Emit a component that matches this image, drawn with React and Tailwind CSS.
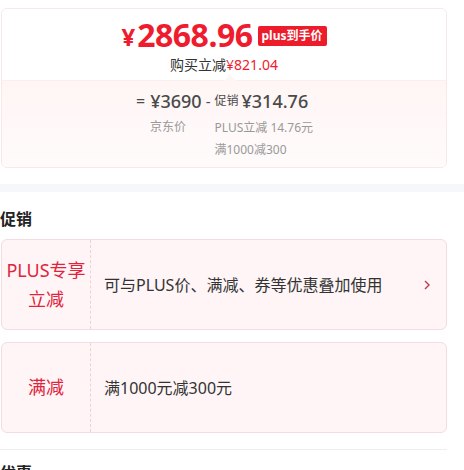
import React from "react";

export default function App() {
  const font = { fontFamily: '"Noto Sans", "Noto Sans CJK SC", sans-serif' };
  return (
    <div className="w-[464px] h-[470px] overflow-hidden bg-white" style={font}>
      <div className="w-[447px]">
        {/* price card */}
        <div className="mt-[8px] ml-[1px] w-[446px] h-[160px] rounded-[6px] border border-[#f8e8ea] overflow-hidden flex flex-col">
          <div className="h-[71px] bg-white flex flex-col items-center pt-[9px]">
            <div className="flex items-center h-[34px]">
              <span className="text-[#ee1c2e] font-bold text-[24px] leading-[34px] mr-[2px] mt-[4px]">¥</span>
              <span className="text-[#ee1c2e] font-bold text-[32px] leading-[34px] tracking-[-0.5px]">2868.96</span>
              <span className="ml-[5px] mt-[2px] bg-[#ec1c2b] text-white font-bold text-[12px] leading-[20px] px-[4px] rounded-[2px]">plus到手价</span>
            </div>
            <div className="text-[14px] leading-[18px] mt-[4px]">
              <span className="text-[#333]">购买立减</span>
              <span className="text-[#ee1c2e]">¥821.04</span>
            </div>
          </div>
          <div className="relative flex-1 bg-gradient-to-b from-[#fff5f5] to-[#fffbfb] border-t border-[#fbeeee]">
            <div className="absolute left-[222px] top-[-6px] w-0 h-0 border-l-[6px] border-r-[6px] border-b-[6px] border-l-transparent border-r-transparent border-b-[#fff5f5]"></div>
            <div className="flex pl-[134px] pt-[8px] text-[#4a4a4a]">
              <div className="flex flex-col items-start">
                <div className="flex items-center h-[24px]">
                  <span className="text-[16px] mr-[5px]">=</span>
                  <span className="text-[18px] font-medium">¥3690</span>
                  <span className="text-[15px] mx-[4px]">-</span>
                </div>
                <div className="text-[12px] text-[#999] leading-[20px] mt-[4px] pl-[14px]">京东价</div>
              </div>
              <div className="flex flex-col">
                <div className="flex items-center h-[24px]">
                  <span className="text-[12px] mr-[3px]">促销</span>
                  <span className="text-[18px] font-medium">¥314.76</span>
                </div>
                <div className="text-[12px] text-[#999] leading-[22px] mt-[4px]">PLUS立减 14.76元</div>
                <div className="text-[12px] text-[#999] leading-[22px]">满1000减300</div>
              </div>
            </div>
          </div>
        </div>
      </div>
      {/* band */}
      <div className="mt-[16px] h-[8px] w-[464px] bg-[#f6f7fb]"></div>
      <div className="w-[447px]">
        <div className="mt-[14px] text-[16px] font-bold text-[#222] leading-[24px]" style={{ fontFamily: '"Noto Sans CJK SC", sans-serif' }}>促销</div>
        <div className="mt-[9px] ml-[1px] w-[446px] h-[91px] rounded-[6px] border border-[#f3dde1] bg-[#fff5f6] flex">
          <div className="w-[89px] border-r border-dashed border-[#efd0d5] flex flex-col items-center justify-center text-[#e0243b] text-[18px] leading-[29px]">
            <span>PLUS专享</span>
            <span>立减</span>
          </div>
          <div className="flex-1 flex items-center pl-[13px] text-[16px] text-[#333]">可与PLUS价、满减、券等优惠叠加使用</div>
          <div className="w-[40px] flex items-center justify-end pr-[15px]">
            <svg width="8" height="12" viewBox="0 0 8 12">
              <path d="M2 2 L6 6 L2 10" fill="none" stroke="#c0384b" strokeWidth="1.4" />
            </svg>
          </div>
        </div>
        <div className="mt-[12px] ml-[1px] w-[446px] h-[91px] rounded-[6px] border border-[#f3dde1] bg-[#fff5f6] flex">
          <div className="w-[89px] border-r border-dashed border-[#efd0d5] flex items-center justify-center text-[#e0243b] text-[18px]">满减</div>
          <div className="flex-1 flex items-center pl-[13px] text-[16px] text-[#333]">满1000元减300元</div>
        </div>
        <div className="mt-[16px] h-px bg-[#eeeeee]"></div>
        <div className="mt-[10px] text-[16px] font-bold text-[#222] leading-[24px]" style={{ fontFamily: '"Noto Sans CJK SC", sans-serif' }}>优惠</div>
      </div>
    </div>
  );
}
